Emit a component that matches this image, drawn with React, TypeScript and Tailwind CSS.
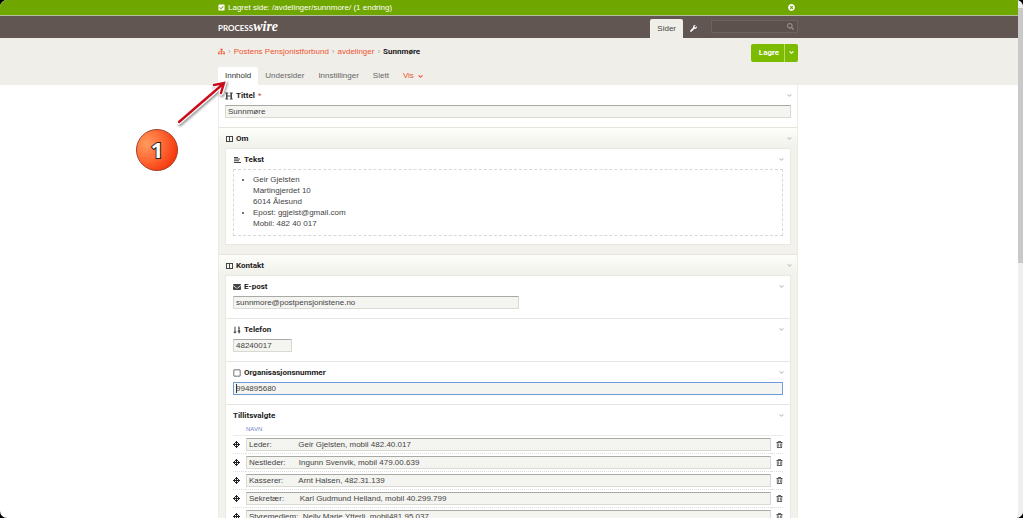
import React, { useState } from 'react';
import type { IconType } from 'react-icons';
import {
    FaAngleDown,
    FaCheckSquare,
    FaEnvelope,
    FaHeading,
    FaRegSquare,
    FaRegTrashAlt,
    FaSearch,
    FaSitemap,
    FaSortNumericDown,
    FaTimesCircle,
    FaWrench,
} from 'react-icons/fa';

const tabs = ['Innhold', 'Undersider', 'Innstillinger', 'Slett'];

const members = [
    'Leder:            Geir Gjelsten, mobil 482.40.017',
    'Nestleder:      Ingunn Svenvik, mobil 479.00.639',
    'Kasserer:       Arnt Halsen, 482.31.139',
    'Sekretær:       Karl Gudmund Helland, mobil 40.299.799',
    'Styremedlem:  Nelly Marie Ytterli, mobil481.95.037',
    'Styremedlem:',
];

const inputClass = 'block h-[13px] border border-[#d9d9d4] border-t-[#a9a9a6] bg-[#f4f4f1] px-[2px] text-[8px] leading-[11px] text-[#444] outline-none';

type GlyphProps = { className?: string };

const ColumnsIcon = ({ className }: GlyphProps) => (
    <svg className={className} viewBox="0 0 8 8" fill="currentColor" fillRule="evenodd">
        <path d="M1 1h7v6H1zM2 2v4h2V2zM5 2v4h2V2z" />
    </svg>
);

const TextIcon = ({ className }: GlyphProps) => (
    <svg className={className} viewBox="0 0 8 8" fill="currentColor">
        <path d="M1 1h4v1H1zM1 2.6h6v1H1zM1 4.3h5v1H1zM1 6h7v1H1z" />
    </svg>
);

const MoveIcon = ({ className }: GlyphProps) => (
    <svg className={className} viewBox="0 0 7 7" fill="currentColor">
        <path d="M3 0h1v7H3zM0 3h7v1H0zM2 1h3v1H2zM2 5h3v1H2zM1 2h1v3H1zM5 2h1v3H5z" />
    </svg>
);

type FieldHeadProps = {
    icon?: IconType | typeof ColumnsIcon;
    label: string;
    htmlFor?: string;
    required?: boolean;
};

const FieldHead = ({ icon: Icon, label, htmlFor, required }: FieldHeadProps) => (
    <div className="flex h-[20px] items-center justify-between pt-[1px]">
        <div className="flex items-center gap-[3px] font-['Roboto',sans-serif] font-bold text-[#222]">
            {Icon && <Icon className="size-[8px] text-[#444]" />}
            {htmlFor ? <label htmlFor={htmlFor}>{label}</label> : <h3>{label}</h3>}
            {required && <span className="font-normal text-[#d2434f]">*</span>}
        </div>
        <button type="button" aria-label={`Skjul ${label}`} className="-mr-[2px]">
            <FaAngleDown className="size-[7px] text-[#c4c4c0]" />
        </button>
    </div>
);

type FieldsetProps = {
    title: string;
    children: React.ReactNode;
};

const Fieldset = ({ title, children }: FieldsetProps) => (
    <section className="border-t border-[#e5e5dd] bg-[#f2f1ec] px-[6px] pb-[9px]">
        <div className="-mx-[6px] bg-linear-to-b from-[#fdfdfa] to-[#f1f1eb] px-[6px]">
            <FieldHead icon={ColumnsIcon} label={title} />
        </div>
        <div className="border border-[#e9e9e1] bg-white">{children}</div>
    </section>
);

// Numbered pin and arrow pointing at the first tab
const Callout = () => (
    <svg className="pointer-events-none absolute top-[78px] -left-[86px] h-[100px] w-[100px]" viewBox="0 0 100 100">
        <defs>
            <radialGradient id="pin" cx="0.25" cy="0.35" r="0.8">
                <stop offset="0" stopColor="#ff9a5c" />
                <stop offset="0.5" stopColor="#ff6a35" />
                <stop offset="1" stopColor="#f4330a" />
            </radialGradient>
            <filter id="shade" x="-20%" y="-20%" width="150%" height="150%">
                <feDropShadow dx="1" dy="2" stdDeviation="1.2" floodOpacity="0.4" />
            </filter>
        </defs>
        <g filter="url(#shade)" strokeLinecap="round">
            <path d="M47 44L91 6M82 7L92 5L89 15" fill="none" stroke="#fff" strokeWidth="4.5" />
            <path d="M47 44L91 6M82 7L92 5L89 15" fill="none" stroke="#c9101c" strokeWidth="2.4" />
        </g>
        <circle cx="25" cy="72" r="20.5" fill="url(#pin)" stroke="#a8402a" />
        <text
            x="25"
            y="80"
            textAnchor="middle"
            className="font-['Open_Sans',sans-serif] text-[22px] font-bold"
            fill="#fff"
            stroke="#222"
            strokeWidth="2"
            paintOrder="stroke"
        >
            1
        </text>
    </svg>
);

const App = () => {
    const [activeTab, setActiveTab] = useState('Innhold');

    return (
        <div className="h-screen bg-black">
            <div className="flex h-full overflow-hidden rounded-[7px] bg-white font-['Liberation_Sans',Arial,sans-serif] text-[8px] leading-[12px] text-[#444]">
                <div className="min-w-0 flex-1 overflow-hidden">
                    <div className="border-b border-[#b5bf9f] bg-[#6fa600] text-white">
                        <div className="mx-auto flex h-[15px] max-w-[582px] items-center justify-between pr-[5px]">
                            <p className="flex items-center gap-[3px]">
                                <FaCheckSquare className="size-[7px]" />
                                <span>Lagret side: /avdelinger/sunnmore/ (1 endring)</span>
                            </p>
                            <button type="button" aria-label="Lukk">
                                <FaTimesCircle className="size-[7px]" />
                            </button>
                        </div>
                    </div>

                    <header className="bg-[#625653]">
                        <div className="mx-auto flex h-[22px] max-w-[582px] items-end pr-[2px]">
                            <a href="#" className="mr-auto flex items-baseline self-center text-white">
                                <span className="font-['Lato',sans-serif] text-[8px] font-bold">PROCESS</span>
                                <span className="font-['Liberation_Serif',serif] text-[14px] font-bold italic">wire</span>
                            </a>
                            <a href="#" className="flex h-[19px] items-center rounded-t-[2px] bg-[#efeee9] px-[7px] text-[#444]">Sider</a>
                            <a href="#" aria-label="Oppsett" className="flex h-[19px] items-center px-[7px] text-white">
                                <FaWrench className="size-[7px]" />
                            </a>
                            <div className="mb-[5px] ml-[7px] flex h-[13px] w-[87px] items-center border border-[#6e625e] bg-[#5d514e] pr-[3px]">
                                <input type="text" aria-label="Søk" className="min-w-0 flex-1 text-white outline-none" />
                                <FaSearch className="size-[7px] text-[#9b908c]" />
                            </div>
                        </div>
                    </header>

                    <div className="bg-[#efeee9]">
                        <div className="mx-auto max-w-[582px] pr-[2px]">
                            <div className="flex h-[29px] items-center justify-between">
                                <nav className="flex items-center gap-[3px] pb-[2px] text-[#f0532d]">
                                    <a href="#" aria-label="Hjem"><FaSitemap className="size-[7px]" /></a>
                                    <span className="text-[#aaa]">›</span>
                                    <a href="#">Postens Pensjonistforbund</a>
                                    <span className="text-[#aaa]">›</span>
                                    <a href="#">avdelinger</a>
                                    <span className="text-[#aaa]">›</span>
                                    <span className="font-['Roboto',sans-serif] font-bold text-[#222]">Sunnmøre</span>
                                </nav>
                                <div className="flex h-[18px] overflow-hidden rounded-[2px] bg-[#7dbb00] text-white">
                                    <button type="submit" className="w-[33px] pl-[3px] font-['Roboto',sans-serif] font-bold">Lagre</button>
                                    <button type="button" aria-label="Flere valg" className="flex w-[14px] items-center justify-center border-l border-[#b7dc6a]">
                                        <FaAngleDown className="size-[7px]" />
                                    </button>
                                </div>
                            </div>
                            <div className="flex h-[18px] items-stretch">
                                {tabs.map((tab) => (
                                    <button
                                        key={tab}
                                        type="button"
                                        onClick={() => setActiveTab(tab)}
                                        className={tab === activeTab ? 'rounded-t-[2px] bg-white px-[7px] text-[#333]' : 'px-[7px] text-[#666]'}
                                    >
                                        {tab}
                                    </button>
                                ))}
                                <button type="button" className="flex items-center gap-[3px] px-[7px] text-[#f0532d]">
                                    Vis
                                    <FaAngleDown className="size-[7px]" />
                                </button>
                            </div>
                        </div>
                    </div>

                    <main className="pointer-events-none relative mx-auto -mt-[85px] max-w-[582px] pt-[85px] pr-[2px]">
                        <Callout />
                        <form className="pointer-events-auto border-x border-[#ecece6]">
                            <div className="px-[6px] pb-[9px]">
                                <FieldHead icon={FaHeading} label="Tittel" htmlFor="title" required />
                                <input id="title" type="text" defaultValue="Sunnmøre" className={`${inputClass} w-full`} />
                            </div>

                            <Fieldset title="Om">
                                <div className="px-[7px] pb-[8px]">
                                    <FieldHead icon={TextIcon} label="Tekst" />
                                    <div className="border border-dashed border-[#d8d8d4] pt-[4px] pb-[6px] pl-[19px]">
                                        <ul className="list-disc leading-[11px]">
                                            <li>Geir Gjelsten<br />Martingjerdet 10<br />6014 Ålesund</li>
                                            <li>Epost: ggjelst@gmail.com<br />Mobil: 482 40 017</li>
                                        </ul>
                                    </div>
                                </div>
                            </Fieldset>

                            <Fieldset title="Kontakt">
                                <div className="border-b border-[#e5e5e0] px-[7px] pb-[9px]">
                                    <FieldHead icon={FaEnvelope} label="E-post" htmlFor="email" />
                                    <input id="email" type="email" defaultValue="sunnmore@postpensjonistene.no" className={`${inputClass} w-[52%]`} />
                                </div>
                                <div className="border-b border-[#e5e5e0] px-[7px] pb-[9px]">
                                    <FieldHead icon={FaSortNumericDown} label="Telefon" htmlFor="phone" />
                                    <input id="phone" type="text" defaultValue="48240017" className={`${inputClass} w-[59px]`} />
                                </div>
                                <div className="border-b border-[#e5e5e0] px-[7px] pb-[9px]">
                                    <FieldHead icon={FaRegSquare} label="Organisasjonsnummer" htmlFor="orgnr" />
                                    <div className="relative">
                                        <input
                                            id="orgnr"
                                            type="text"
                                            defaultValue="994895680"
                                            className="block h-[13px] w-full border border-[#6f9bd8] bg-[#f4f4f1] px-[2px] text-[8px] leading-[11px] text-[#444] outline-none"
                                        />
                                        <span className="absolute top-[2px] left-[3px] h-[9px] w-px bg-[#333]" />
                                    </div>
                                </div>
                                <div className="px-[7px]">
                                    <FieldHead label="Tillitsvalgte" />
                                    <table className="w-full">
                                        <thead>
                                            <tr className="h-[10px] border-b border-[#ecece8] text-left text-[6px] leading-[9px] text-[#6d7fc4]">
                                                <th className="w-[13px]" />
                                                <th className="font-normal">NAVN</th>
                                                <th className="w-[12px]" />
                                            </tr>
                                        </thead>
                                        <tbody>
                                            {members.map((member, i) => (
                                                <tr key={i} className="h-[18px] border-b border-dotted border-[#dcdcd8]">
                                                    <td><MoveIcon className="size-[7px] text-[#222]" /></td>
                                                    <td>
                                                        <input type="text" aria-label={`Navn ${i + 1}`} defaultValue={member} className={`${inputClass} w-full`} />
                                                    </td>
                                                    <td>
                                                        <button type="button" aria-label="Slett rad" className="ml-auto block">
                                                            <FaRegTrashAlt className="size-[7px] text-[#333]" />
                                                        </button>
                                                    </td>
                                                </tr>
                                            ))}
                                        </tbody>
                                    </table>
                                </div>
                            </Fieldset>
                        </form>
                    </main>
                </div>

                <div className="w-[5px] bg-[#efefef] pt-[8px]">
                    <div className="h-1/2 bg-[#c9c9c9]" />
                </div>
            </div>
        </div>
    );
};

export default App;
